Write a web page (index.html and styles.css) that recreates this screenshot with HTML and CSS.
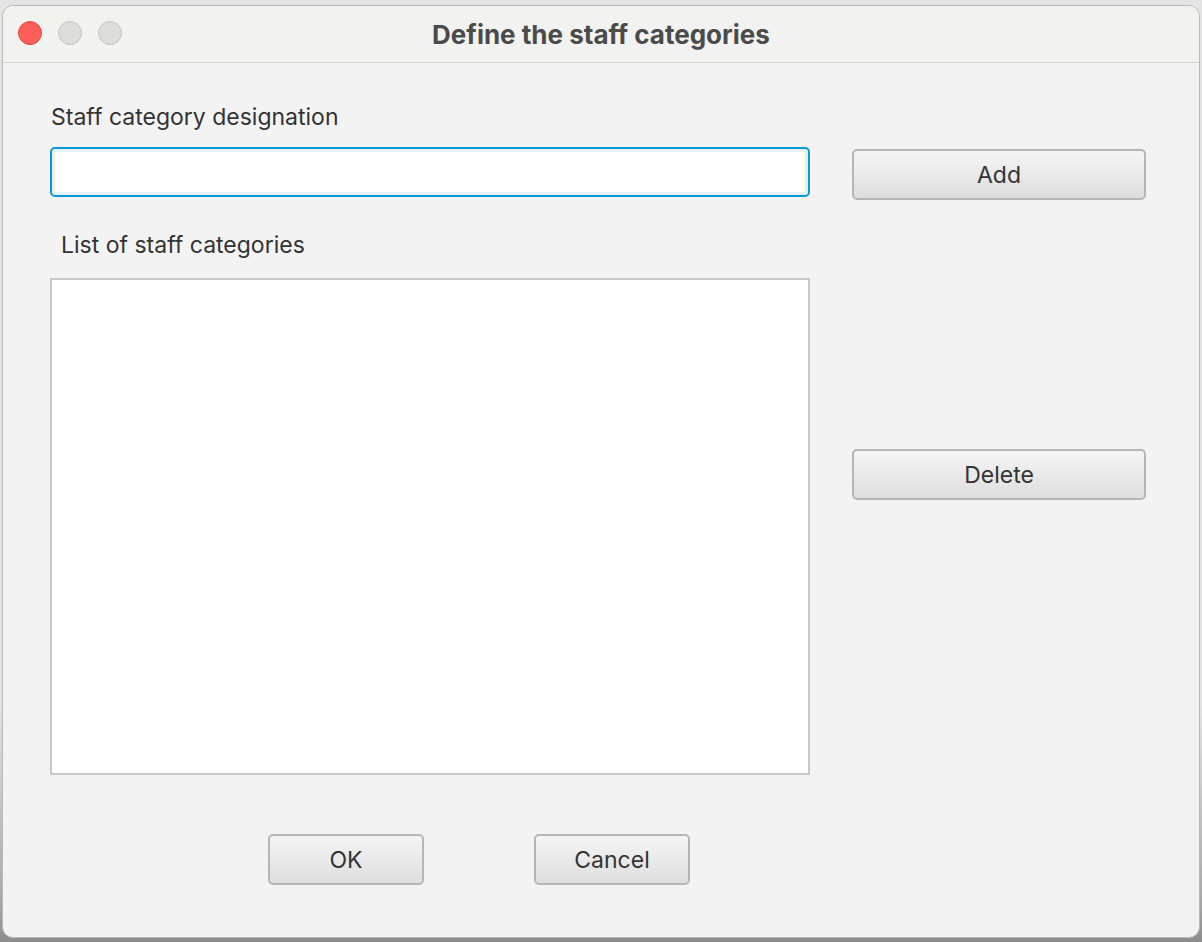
FILE: index.html
```html
<!DOCTYPE html>
<html>
<head>
<meta charset="utf-8">
<link rel="stylesheet" href="styles.css">
</head>
<body>
<div class="desk">
  <div class="window">
    <div class="titlebar">
      <div class="lights">
        <span class="light red"></span>
        <span class="light gray"></span>
        <span class="light gray"></span>
      </div>
      <div class="title">Define the staff categories</div>
    </div>
    <div class="content">
      <div class="main">
        <div class="left">
          <div class="label">Staff category designation</div>
          <div class="field"></div>
          <div class="label list-label">List of staff categories</div>
          <div class="list"></div>
        </div>
        <div class="right">
          <button class="btn add">Add</button>
          <button class="btn del">Delete</button>
        </div>
      </div>
      <div class="actions">
        <button class="btn small">OK</button>
        <button class="btn small">Cancel</button>
      </div>
    </div>
  </div>
</div>
</body>
</html>
```
FILE: styles.css
```css
* { box-sizing: border-box; }
html, body { margin: 0; padding: 0; }
body {
  width: 1202px;
  height: 942px;
  overflow: hidden;
  background: #9a9a9a;
  font-family: Inter, "Open Sans", "Liberation Sans", sans-serif;
}
.desk {
  height: 942px;
  padding: 5px 2px 0 2px;
  background: linear-gradient(#e4e4e4 0, #e4e4e4 700px, #a8a8a8 900px, #8c8c8c 942px);
}
.window {
  width: 1198px;
  height: 933px;
  background: #f3f3f3;
  border-radius: 11px;
  border: 1px solid #b9b9b9;
  overflow: hidden;
  display: flex;
  flex-direction: column;
}
.titlebar {
  height: 57px;
  flex: none;
  background: #f2f2f1;
  border-bottom: 1px solid #d2d2d2;
  position: relative;
  display: flex;
  align-items: center;
  justify-content: center;
}
.lights {
  position: absolute;
  left: 15px;
  top: 15px;
  display: flex;
  gap: 16px;
}
.light {
  width: 24px;
  height: 24px;
  border-radius: 50%;
  display: block;
}
.light.red { background: #fe5f57; border: 1px solid #e2463f; }
.light.gray { background: #dcdcdb; border: 1px solid #c4c4c3; }
.title {
  font-weight: 700;
  font-size: 26px;
  color: #4b4b4b;
  padding-top: 1px;
}
.content {
  flex: 1;
  padding-left: 47px;
}
.main {
  display: flex;
  gap: 42px;
}
.left {
  width: 760px;
  padding-top: 41px;
}
.label {
  font-size: 23px;
  line-height: 26px;
  color: #333;
  padding-left: 1px;
}
.list-label {
  margin-top: 35px;
  padding-left: 11px;
}
.field {
  margin-top: 17px;
  height: 50px;
  background: #fff;
  border: 2px solid #0b9ad6;
  border-radius: 5px;
  box-shadow: inset 0 0 0 3px #e3f2fa;
}
.list {
  margin-top: 20px;
  height: 497px;
  background: #fff;
  border: 2px solid #c9c9c9;
}
.right {
  width: 294px;
  padding-top: 86px;
  display: flex;
  flex-direction: column;
}
.btn {
  font-family: inherit;
  font-size: 23px;
  color: #333;
  height: 51px;
  border: 2px solid #b6b6b6;
  border-radius: 5px;
  background: linear-gradient(#f5f5f5, #dedede);
  padding: 0;
  cursor: default;
}
.del { margin-top: 249px; }
.actions {
  display: flex;
  gap: 110px;
  padding-left: 218px;
  margin-top: 59px;
}
.small { width: 156px; }
```
